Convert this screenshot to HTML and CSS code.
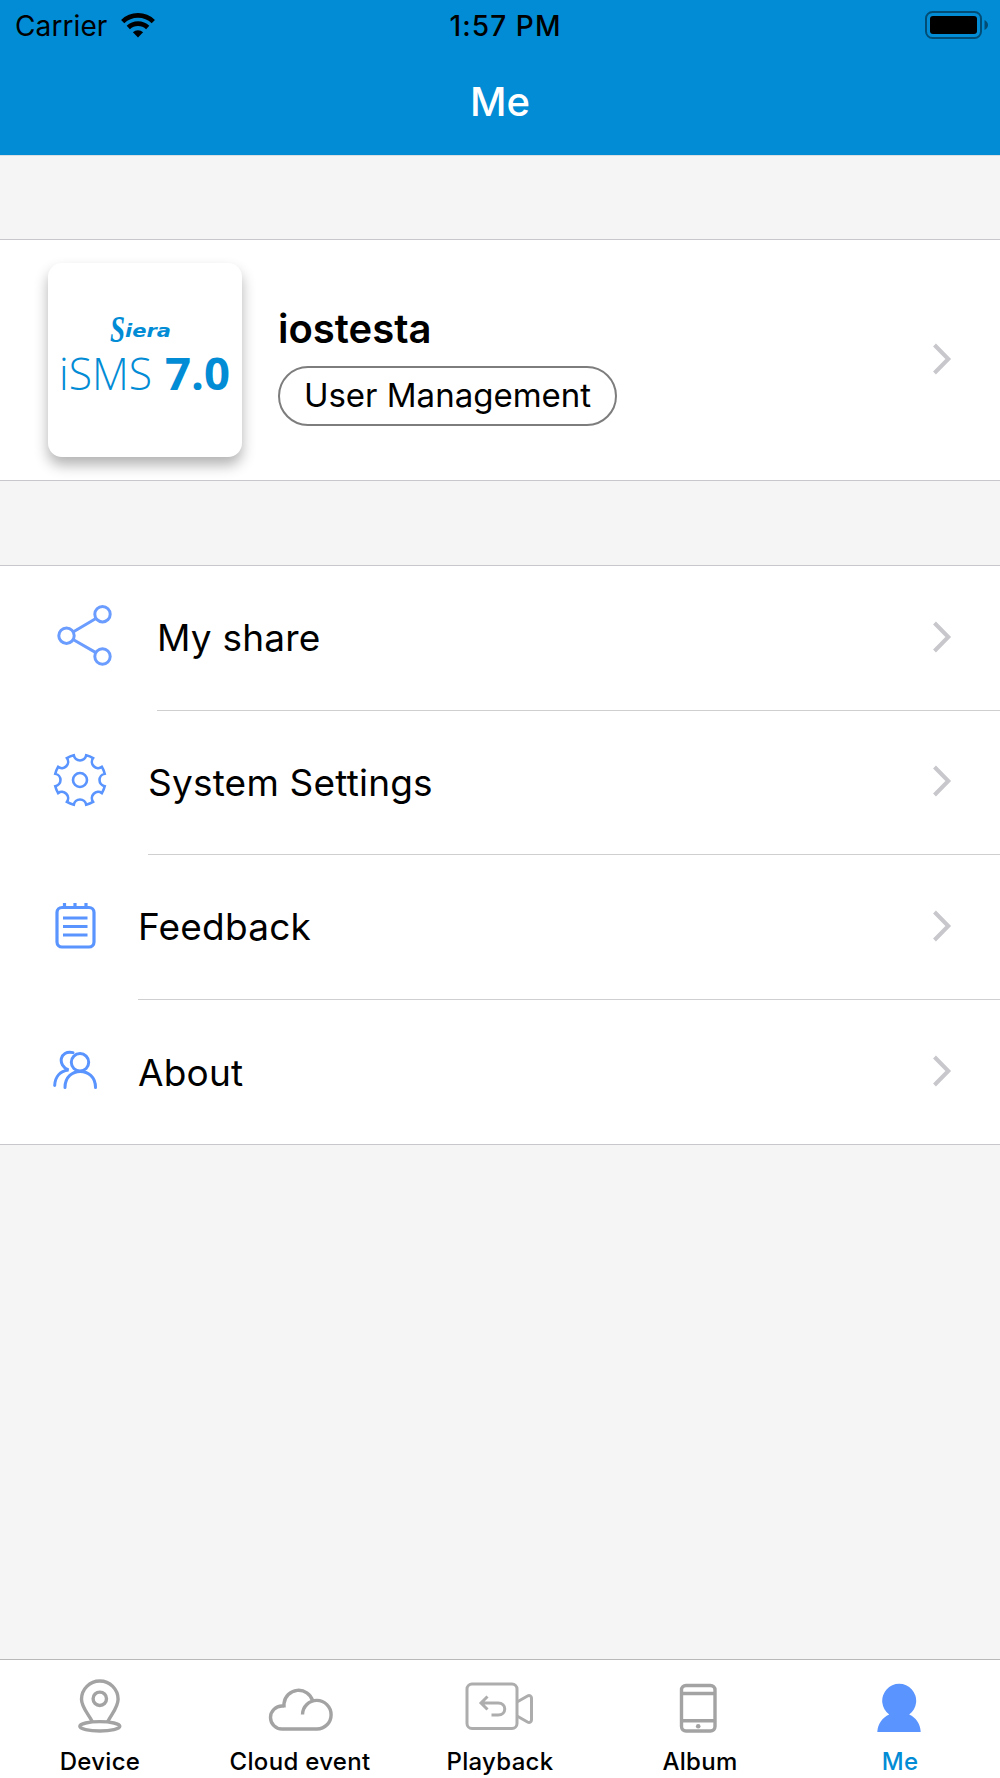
FILE: index.html
```html
<!DOCTYPE html>
<html lang="en">
<head>
  <meta charset="UTF-8">
  <title>Me</title>
  <link rel="stylesheet" href="styles.css">
</head>
<body>
<header class="header">
  <div class="status-bar">
    <div class="carrier">
      <span>Carrier</span>
      <svg width="34" height="25" viewBox="0 0 34 25">
        <g fill="none" stroke="#000" stroke-width="4.6">
          <path d="M1.7 8.6a22 22 0 0 1 30.6 0"/>
          <path d="M7.3 14.5a14 14 0 0 1 19.4 0"/>
        </g>
        <path d="M17 24.4l-5.1-5.1a7.4 7.4 0 0 1 10.2 0z"/>
      </svg>
    </div>
    <span class="time">1:57 PM</span>
    <svg class="battery" width="64" height="28" viewBox="0 0 64 28">
      <rect x="1" y="1" width="55" height="26" rx="6.5" fill="none" stroke="#000" stroke-opacity=".45" stroke-width="2"/>
      <rect x="5" y="5" width="47" height="18" rx="3" fill="#000"/>
      <path d="M59.500 9q3.500 2 3.500 5t-3.500 5z" fill-opacity=".45"/>
    </svg>
  </div>
  <h1 class="title">Me</h1>
</header>

<main class="content">
  <section class="profile">
    <div class="logo">
      <svg width="194" height="194" viewBox="0 0 194 194">
        <g fill="#028cd5">
          <text x="62" y="79" class="logo-s" textLength="15" lengthAdjust="spacingAndGlyphs">S</text>
          <text x="77" y="74" class="logo-iera" textLength="46" lengthAdjust="spacingAndGlyphs">iera</text>
          <text x="11" y="126.500" class="logo-isms" textLength="93" lengthAdjust="spacingAndGlyphs">iSMS</text>
          <text x="117" y="126.500" class="logo-version" textLength="65" lengthAdjust="spacingAndGlyphs">7.0</text>
        </g>
      </svg>
    </div>
    <div class="user">
      <h2 class="user-name">iostesta</h2>
      <a class="user-button" href="#">User Management</a>
    </div>
    <svg class="chevron" width="20" height="32" viewBox="0 0 20 32">
      <path d="M2.500 2l13.800 14-13.800 14"/>
    </svg>
  </section>

  <nav class="menu">
    <a class="menu-item" href="#">
      <svg class="menu-icon share" width="56" height="64" viewBox="0 0 56 64">
        <circle cx="9.500" cy="31.700" r="7.700"/>
        <circle cx="45.500" cy="10.200" r="7.700"/>
        <circle cx="45.500" cy="52.500" r="7.700"/>
        <path d="M16.500 27.800l22.400-13.300M16.500 35.800l22.400 12.800"/>
      </svg>
      <div class="menu-text">
        <span>My share</span>
        <svg class="chevron" width="20" height="32" viewBox="0 0 20 32">
          <path d="M2.500 2l13.800 14-13.800 14"/>
        </svg>
      </div>
    </a>
    <a class="menu-item" href="#">
      <svg class="menu-icon gear" width="54" height="54" viewBox="-27 -27 54 54">
        <path d="M24.700 6.200A25.500 25.500 0 0 1 21.900 13.100A6.300 6.300 0 0 0 13.100 21.900A25.500 25.500 0 0 1 6.200 24.700A6.300 6.300 0 0 0-6.200 24.700A25.500 25.500 0 0 1-13.100 21.900A6.300 6.300 0 0 0-21.900 13.100A25.500 25.500 0 0 1-24.700 6.200A6.300 6.300 0 0 0-24.700-6.200A25.500 25.500 0 0 1-21.900-13.100A6.300 6.300 0 0 0-13.100-21.900A25.500 25.500 0 0 1-6.200-24.700A6.300 6.300 0 0 0 6.200-24.700A25.500 25.500 0 0 1 13.100-21.900A6.300 6.300 0 0 0 21.900-13.100A25.500 25.500 0 0 1 24.700-6.200A6.300 6.300 0 0 0 24.700 6.200z"/>
        <circle r="7"/>
      </svg>
      <div class="menu-text">
        <span>System Settings</span>
        <svg class="chevron" width="20" height="32" viewBox="0 0 20 32">
          <path d="M2.500 2l13.800 14-13.800 14"/>
        </svg>
      </div>
    </a>
    <a class="menu-item" href="#">
      <svg class="menu-icon notes" width="42" height="48" viewBox="0 0 42 48">
        <rect x="3" y="5.500" width="37" height="39.500" rx="5"/>
        <path d="M10.500 1v4M21 1v4M32 1v4M9 16h24.500M9 24.500h24.500M9 33h24.500"/>
      </svg>
      <div class="menu-text">
        <span>Feedback</span>
        <svg class="chevron" width="20" height="32" viewBox="0 0 20 32">
          <path d="M2.500 2l13.800 14-13.800 14"/>
        </svg>
      </div>
    </a>
    <a class="menu-item" href="#">
      <svg class="menu-icon people" width="44" height="40" viewBox="0 0 44 40">
        <circle cx="27" cy="12.300" r="8.700"/>
        <path d="M12 37.500c0-21.500 30.500-21.500 30.500 0M20 2.600C6.500-.3 4 15.500 15.500 20C7 21 2 27 1.700 35.500"/>
      </svg>
      <div class="menu-text">
        <span>About</span>
        <svg class="chevron" width="20" height="32" viewBox="0 0 20 32">
          <path d="M2.500 2l13.800 14-13.800 14"/>
        </svg>
      </div>
    </a>
  </nav>
</main>

<footer class="tab-bar">
  <a class="tab" href="#">
    <svg class="tab-icon" width="72" height="60" viewBox="0 0 72 60">
      <path d="M28.500 44C23 34 17.500 29 17.500 21.300a18.300 18.300 0 0 1 36.600 0C54.100 29 49 34 43.500 44"/>
      <circle cx="35.800" cy="20.800" r="6.700"/>
      <ellipse cx="35.800" cy="48.300" rx="20" ry="4.700"/>
    </svg>
    <span>Device</span>
  </a>
  <a class="tab" href="#">
    <svg class="tab-icon" width="72" height="60" viewBox="0 0 72 60">
      <path d="M20 28h-2a11.500 11.500 0 0 0 0 23h35a14.300 14.300 0 1 0-14.500-14.500M20 29.500V25.500A14.700 14.700 0 0 1 48.700 22.800"/>
    </svg>
    <span>Cloud event</span>
  </a>
  <a class="tab playback" href="#">
    <svg class="tab-icon" width="72" height="60" viewBox="0 0 72 60">
      <rect x="3" y="6" width="50" height="44.500" rx="5"/>
      <path d="M53 24l10.500-6c2-1 4 0 4 2v22c0 2-2 3-4 2L53 38M23.500 18.500L17 25l6.500 6.500M17 25h17c9 0 9 12 0 12h-6.500"/>
    </svg>
    <span>Playback</span>
  </a>
  <a class="tab" href="#">
    <svg class="tab-icon" width="72" height="60" viewBox="0 0 72 60">
      <rect x="17.500" y="7.500" width="33.500" height="45.500" rx="4.500"/>
      <path d="M17.500 15.500H51M17.500 42.700H51"/>
      <circle class="dot" cx="34.200" cy="48.300" r="2.300"/>
    </svg>
    <span>Album</span>
  </a>
  <a class="tab active" href="#">
    <svg class="tab-icon" width="72" height="60" viewBox="0 0 72 60">
      <path d="M13.300 54c.5-8 4.900-14.200 11.900-17.400a17 17 0 1 1 20 0c7 3.200 11.100 9.400 11.500 17.400z"/>
    </svg>
    <span>Me</span>
  </a>
</footer>
</body>
</html>
```
FILE: styles.css
```css
* {
  box-sizing: border-box;
}
body {
  display: flex;
  flex-direction: column;
  height: 1778px;
  margin: 0;
  background: #f5f5f5;
  color: #000;
  font-family: Inter, "Liberation Sans", sans-serif;
}
a {
  color: inherit;
  text-decoration: none;
}
svg {
  display: block;
  flex: none;
}
.header {
  height: 156px;
  background: #028cd5;
  border-bottom: 1px solid #d9dfe3;
}
.status-bar {
  display: grid;
  grid-template-columns: 1fr auto 1fr;
  align-items: center;
  height: 50px;
  padding: 0 11px 0 15px;
  font-size: 28px;
}
.carrier {
  display: flex;
  align-items: center;
  gap: 14px;
  letter-spacing: .1px;
}
.carrier span, .time {
  padding-top: 1px;
}
.time {
  padding-left: 3px;
  margin-right: -4px;
  font-weight: 550;
  letter-spacing: 1.1px;
}
.battery {
  justify-self: end;
}
.title {
  margin: 0;
  font-size: 40px;
  font-weight: 550;
  line-height: 104px;
  text-align: center;
  color: #fff;
}
.content {
  flex: 1;
}
.profile {
  display: flex;
  align-items: center;
  height: 242px;
  margin-top: 83px;
  padding: 0 48px;
  background: #fff;
  border-top: 1px solid #c8c8cc;
  border-bottom: 1px solid #c8c8cc;
}
.logo {
  width: 194px;
  height: 194px;
  border-radius: 14px;
  background: #fff;
  box-shadow: 0 8px 14px rgba(0, 0, 0, .3);
}
.logo-s {
  font: italic bold 38px "Liberation Serif", serif;
}
.logo-iera {
  font: italic bold 18px "DejaVu Sans", sans-serif;
}
.logo-isms {
  font: 300 45px "Open Sans", sans-serif;
}
.logo-version {
  font: bold 45px "Open Sans", sans-serif;
}
.user {
  flex: 1;
  padding: 9px 0 0 36px;
}
.user-name {
  margin: 0 0 12px;
  font-size: 40px;
  font-weight: 600;
  line-height: 50px;
}
.user-button {
  display: flex;
  align-items: center;
  justify-content: center;
  width: 339px;
  height: 60px;
  padding-bottom: 1px;
  border: 2px solid #7d7d7d;
  border-radius: 30px;
  font-size: 33px;
}
.chevron {
  margin-bottom: 2px;
  fill: none;
  stroke: #c7c7cc;
  stroke-width: 4;
}
.menu {
  display: flex;
  flex-direction: column;
  height: 580px;
  margin-top: 84px;
  background: #fff;
  border-top: 1px solid #c8c8cc;
  border-bottom: 1px solid #c8c8cc;
}
.menu-item {
  display: flex;
  flex: 1;
  align-items: center;
}
.menu-icon {
  margin-bottom: 4px;
  fill: none;
  stroke: #5a94ff;
  stroke-width: 3;
}
.menu-text {
  display: flex;
  flex: 1;
  align-items: center;
  justify-content: space-between;
  align-self: stretch;
  padding-right: 48px;
  border-bottom: 1px solid #cfcfd2;
  font-size: 37px;
  letter-spacing: .2px;
}
.menu-item:last-child .menu-text {
  padding-top: 1px;
  border-bottom: none;
}
.share {
  margin-left: 57px;
  margin-right: 44px;
  stroke: #6b9cff;
}
.gear {
  margin-left: 52.5px;
  margin-right: 41.5px;
  margin-bottom: 5px;
  stroke-width: 2.6;
}
.notes {
  margin-left: 54px;
  margin-right: 42px;
  margin-bottom: 2px;
  stroke-width: 3.2;
}
.people {
  margin-left: 53px;
  margin-right: 41px;
  stroke-linecap: round;
}
.tab-bar {
  display: flex;
  height: 119px;
  background: #fff;
  border-top: 1px solid #b9b9b9;
}
.tab {
  display: flex;
  flex: 1;
  flex-direction: column;
  align-items: center;
  gap: 9px;
  padding-top: 18px;
  font-size: 24px;
  font-weight: 500;
  line-height: 30px;
  letter-spacing: .3px;
}
.tab-icon {
  fill: none;
  stroke: #a3a3a3;
  stroke-width: 3.4;
}
.playback .tab-icon {
  stroke: #adadad;
  stroke-width: 3;
}
.dot {
  fill: #a3a3a3;
  stroke: none;
}
.active {
  color: #028cd5;
}
.active .tab-icon {
  fill: #5a94ff;
  stroke: none;
}
```
